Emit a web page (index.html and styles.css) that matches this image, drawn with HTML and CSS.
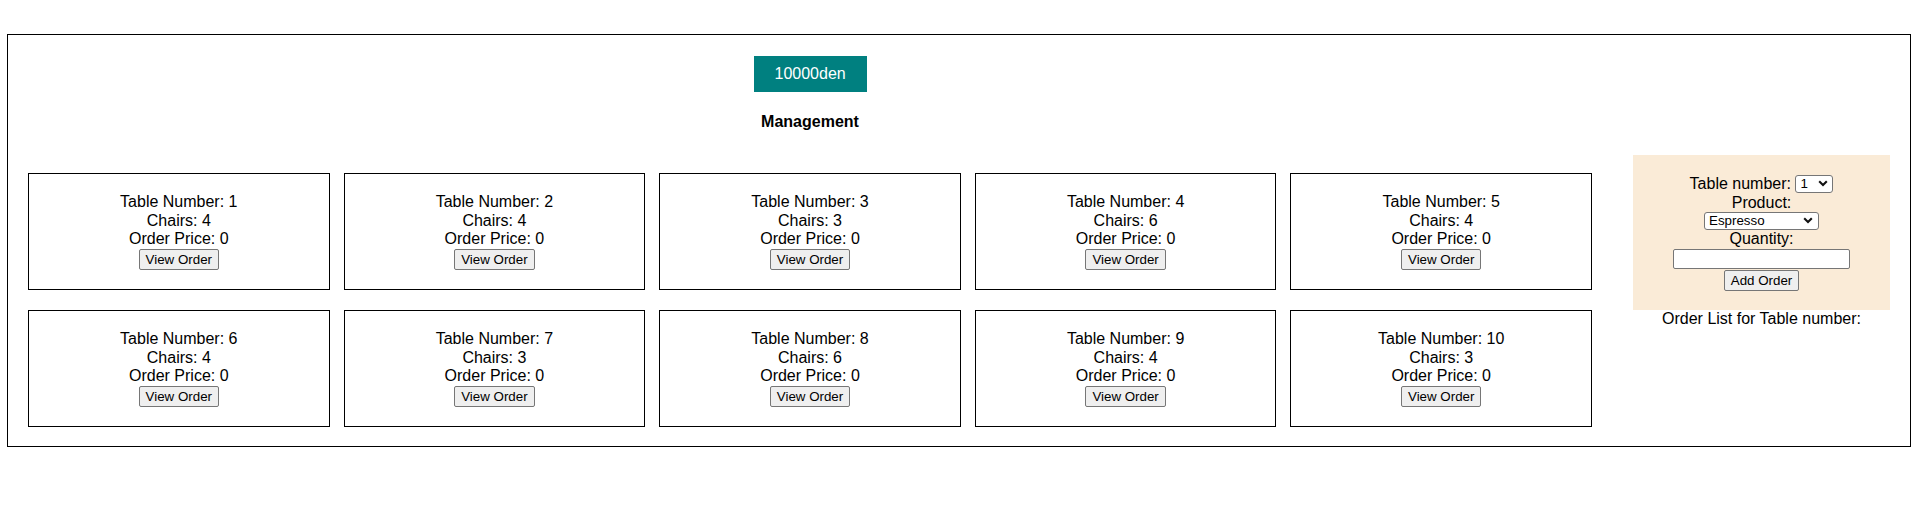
FILE: index.html
```html
<!DOCTYPE html>
<html>
<head>
<meta charset="utf-8">
<title>Management</title>
<link rel="stylesheet" href="styles.css">
</head>
<body>
<div class="page">
  <div class="main">
    <div class="balance">10000den</div>
    <h4 class="title">Management</h4>
    <div class="tables">
      <div class="card"><div class="line">Table Number: 1</div><div class="line">Chairs: 4</div><div class="line">Order Price: 0</div><button class="btn">View Order</button></div>
      <div class="card"><div class="line">Table Number: 2</div><div class="line">Chairs: 4</div><div class="line">Order Price: 0</div><button class="btn">View Order</button></div>
      <div class="card"><div class="line">Table Number: 3</div><div class="line">Chairs: 3</div><div class="line">Order Price: 0</div><button class="btn">View Order</button></div>
      <div class="card"><div class="line">Table Number: 4</div><div class="line">Chairs: 6</div><div class="line">Order Price: 0</div><button class="btn">View Order</button></div>
      <div class="card"><div class="line">Table Number: 5</div><div class="line">Chairs: 4</div><div class="line">Order Price: 0</div><button class="btn">View Order</button></div>
      <div class="card"><div class="line">Table Number: 6</div><div class="line">Chairs: 4</div><div class="line">Order Price: 0</div><button class="btn">View Order</button></div>
      <div class="card"><div class="line">Table Number: 7</div><div class="line">Chairs: 3</div><div class="line">Order Price: 0</div><button class="btn">View Order</button></div>
      <div class="card"><div class="line">Table Number: 8</div><div class="line">Chairs: 6</div><div class="line">Order Price: 0</div><button class="btn">View Order</button></div>
      <div class="card"><div class="line">Table Number: 9</div><div class="line">Chairs: 4</div><div class="line">Order Price: 0</div><button class="btn">View Order</button></div>
      <div class="card"><div class="line">Table Number: 10</div><div class="line">Chairs: 3</div><div class="line">Order Price: 0</div><button class="btn">View Order</button></div>
    </div>
  </div>
  <div class="side">
    <div class="form">
      <div class="row-table"><span>Table number:&nbsp;</span><select class="sel sel-num"><option>1</option><option>2</option><option>3</option><option>4</option><option>5</option><option>6</option><option>7</option><option>8</option><option>9</option><option>10</option></select></div>
      <div class="label">Product:</div>
      <select class="sel sel-prod"><option>Espresso</option><option>Cappuccino</option><option>Latte</option></select>
      <div class="label">Quantity:</div>
      <input class="qty" type="text">
      <button class="btn btn-add">Add Order</button>
    </div>
    <div class="order-list">Order List for Table number:</div>
  </div>
</div>
</body>
</html>
```
FILE: styles.css
```css
html, body {
  margin: 0;
  padding: 0;
  background: #fff;
}
body {
  font-family: "Liberation Sans", Arial, sans-serif;
  font-size: 16px;
  color: #000;
}
.page {
  margin: 34px 7px 0;
  border: 1px solid #000;
  padding: 21px 20px 19px;
  display: flex;
  align-items: center;
  gap: 41px;
}
.main {
  flex: 1;
  display: flex;
  flex-direction: column;
  align-items: center;
}
.balance {
  background: #008080;
  color: #fff;
  height: 36px;
  line-height: 36px;
  padding: 0 21px;
  box-sizing: border-box;
  width: 113px;
  text-align: center;
}
.title {
  margin: 21.28px 0;
  font-size: 16px;
  font-weight: bold;
  line-height: 18.4px;
}
.tables {
  align-self: stretch;
  margin-top: 20px;
  display: grid;
  grid-template-columns: repeat(5, 1fr);
  column-gap: 14px;
  row-gap: 20px;
}
.card {
  height: 117px;
  box-sizing: border-box;
  border: 1px solid #000;
  display: flex;
  flex-direction: column;
  align-items: center;
  justify-content: center;
  text-align: center;
}
.line {
  line-height: 18.4px;
}
.btn {
  font-family: "Liberation Sans", Arial, sans-serif;
  font-size: 13.333px;
  color: #000;
  background: #efefef;
  border: 1px solid #767676;
  border-radius: 2px;
  padding: 0 6px;
  height: 21px;
  line-height: 19px;
  margin: 0;
}
.side {
  width: 257px;
  display: flex;
  flex-direction: column;
  align-items: center;
}
.form {
  align-self: stretch;
  background: #faebd7;
  padding: 20px 0 19px;
  display: flex;
  flex-direction: column;
  align-items: center;
}
.row-table {
  display: flex;
  align-items: flex-start;
  height: 19px;
  line-height: 18.4px;
}
.label {
  height: 18px;
  line-height: 18px;
}
.sel {
  -webkit-appearance: none;
  appearance: none;
  box-sizing: border-box;
  height: 18px;
  border: 1px solid #767676;
  border-radius: 3px;
  background-color: #fff;
  background-image: url("data:image/svg+xml;utf8,<svg xmlns='http://www.w3.org/2000/svg' width='10' height='7' viewBox='0 0 10 7'><path d='M1.2 1.3 L5 5 L8.8 1.3' fill='none' stroke='%23111' stroke-width='2.1'/></svg>");
  background-repeat: no-repeat;
  background-position: right 4px center;
  background-size: 10px 7px;
  font-family: "Liberation Sans", Arial, sans-serif;
  font-size: 13.333px;
  color: #000;
  padding: 0 0 0 4px;
  margin: 0;
  line-height: 16px;
}
.sel-num {
  width: 38px;
}
.sel-prod {
  width: 115px;
  background-position: right 5px center;
}
.qty {
  box-sizing: border-box;
  width: 177px;
  height: 20px;
  margin: 1px 0 0;
  padding: 1px 2px;
  border: 1px solid #767676;
  border-radius: 2px;
  background: #fff;
  font-family: "Liberation Sans", Arial, sans-serif;
  font-size: 13.333px;
}
.btn-add {
  margin-top: 1px;
  padding: 0 6px;
}
.order-list {
  line-height: 18.4px;
  text-align: center;
}
```
